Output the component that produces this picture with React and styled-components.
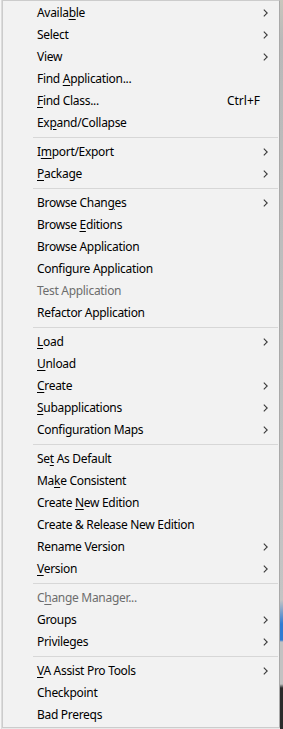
import React from "react";
import styled, { createGlobalStyle } from "styled-components";

const GlobalStyle = createGlobalStyle`
  html, body {
    margin: 0;
    padding: 0;
    background: #e9e9e9;
  }
  body {
    font-family: "Noto Sans", "Open Sans", sans-serif;
  }
`;

const Screen = styled.div`
  display: flex;
  width: 283px;
  height: 729px;
  overflow: hidden;
`;

const LeftEdge = styled.div`
  width: 2px;
  flex: none;
  background: linear-gradient(to right, #f6f6f6 0 1px, #dcdcdc 1px 2px);
`;

const RightEdge = styled.div`
  flex: 1;
  background: linear-gradient(
    to bottom,
    #c9c6bc 0px,
    #b9b9b9 40px,
    #c4c4c4 600px,
    #2f7bd3 624px,
    #2f7bd3 640px,
    #c2c2c2 642px,
    #c2c2c2 684px,
    #2a2a2a 688px,
    #2a2a2a 729px
  );
`;

const Menu = styled.div`
  width: 276px;
  height: 725px;
  flex: none;
  background: #f2f2f2;
  border: 1px solid #cccccc;
  border-right-color: #a9a9a9;
  padding-top: 1px;
  box-sizing: content-box;
  font-size: 12px;
  letter-spacing: -0.3px;
  color: #000;
`;

const Item = styled.div`
  display: flex;
  align-items: center;
  height: 22px;
  box-sizing: border-box;
  padding: 0 10px 2px 34px;
  color: ${(p) => (p.$disabled ? "#6d6d6d" : "#000")};
  white-space: nowrap;
`;

const Label = styled.span`
  flex: 1;
  u {
    text-underline-offset: 2px;
  }
`;

const Shortcut = styled.span`
  margin-right: 9px;
  letter-spacing: 0;
`;

const Arrow = styled.svg`
  width: 5px;
  height: 8px;
  flex: none;
  margin: 2px 1px 0 0;
`;

const Separator = styled.div`
  height: 7px;
  display: flex;
  align-items: center;
  padding-left: 30px;
  padding-right: 1px;
  &::after {
    content: "";
    flex: 1;
    height: 1px;
    background: #d7d7d7;
  }
`;

const menu = [
  [["Availa", "b", "le"], true],
  [["Select"], true],
  [["View"], true],
  [["Find ", "A", "pplication..."]],
  [["", "F", "ind Class..."], false, "Ctrl+F"],
  [["Ex", "p", "and/Collapse"]],
  "sep",
  [["I", "m", "port/Export"], true],
  [["", "P", "ackage"], true],
  "sep",
  [["Browse Chan", "g", "es"], true],
  [["Browse ", "E", "ditions"]],
  [["Browse Application"]],
  [["Configure Application"]],
  [["Test Application"], false, null, true],
  [["Refactor Application"]],
  "sep",
  [["", "L", "oad"], true],
  [["", "U", "nload"]],
  [["", "C", "reate"], true],
  [["", "S", "ubapplications"], true],
  [["Configuration Maps"], true],
  "sep",
  [["Se", "t", " As Default"]],
  [["Ma", "k", "e Consistent"]],
  [["Create ", "N", "ew Edition"]],
  [["Create & Release New Edition"]],
  [["Rename Version"], true],
  [["", "V", "ersion"], true],
  "sep",
  [["C", "h", "ange Manager..."], false, null, true],
  [["Groups"], true],
  [["Privileges"], true],
  "sep",
  [["", "V", "A Assist Pro Tools"], true],
  [["Checkpoint"]],
  [["Bad Prereqs"]],
];

function ChevronRight() {
  return (
    <Arrow viewBox="0 0 5 8">
      <path d="M0.8 0.6 L4.2 4 L0.8 7.4" fill="none" stroke="#3a3a3a" strokeWidth="1.1" />
    </Arrow>
  );
}

function MenuItem({ parts, sub, shortcut, disabled }) {
  const [before, key, after] = parts;
  return (
    <Item $disabled={disabled}>
      <Label>
        {before}
        {key && <u>{key}</u>}
        {after}
      </Label>
      {shortcut && <Shortcut>{shortcut}</Shortcut>}
      {sub && <ChevronRight />}
    </Item>
  );
}

export default function App() {
  return (
    <>
      <GlobalStyle />
      <Screen>
        <LeftEdge />
        <Menu>
          {menu.map((m, i) =>
            m === "sep" ? (
              <Separator key={i} />
            ) : (
              <MenuItem key={i} parts={m[0]} sub={m[1]} shortcut={m[2]} disabled={m[3]} />
            )
          )}
        </Menu>
        <RightEdge />
      </Screen>
    </>
  );
}
